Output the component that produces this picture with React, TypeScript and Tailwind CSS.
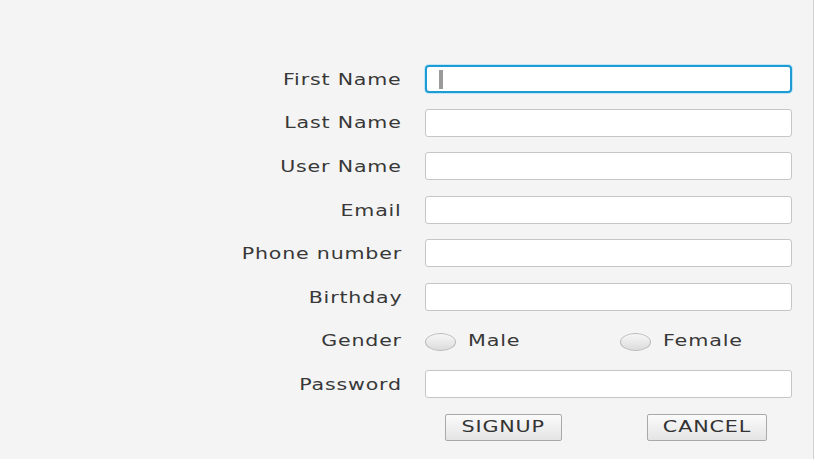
import { useState } from "react";

const fields = ["First Name", "Last Name", "User Name", "Email", "Phone number", "Birthday"];

function Radio({ label, checked, onClick }: { label: string; checked: boolean; onClick: () => void }) {
  return (
    <button type="button" onClick={onClick} className="flex w-[195px] shrink-0 items-center gap-[12px]">
      <span className="flex h-[18px] w-[31px] items-center justify-center rounded-[50%] border border-[#b9b9b9] bg-gradient-to-b from-[#f7f7f7] to-[#dcdcdc]">
        {checked && <span className="h-[7px] w-[12px] rounded-[50%] bg-[#333]" />}
      </span>
      <span className="inline-block origin-left scale-x-[1.38]">{label}</span>
    </button>
  );
}

export default function App() {
  const [gender, setGender] = useState<string | null>(null);

  return (
    <div
      className="h-[459px] w-[814px] overflow-hidden border-r border-[#cfcfcf] bg-[#f4f4f4] pt-[65px] text-[15px] tracking-[0.6px] text-[#383838]"
      style={{ fontFamily: '"DejaVu Sans", sans-serif' }}
    >
      <div className="grid grid-cols-[402px_367px] gap-x-[23px] gap-y-[15.6px]">
        {fields.map((f, i) => (
          <div key={f} className="contents">
            <label className="flex h-[28px] items-center justify-end pt-[2px]">
              <span className="inline-block origin-right scale-x-[1.37]">{f}</span>
            </label>
            {i === 0 ? (
              <div className="flex h-[28px] items-center rounded-[4px] border-2 border-[#1f9bd3] bg-white pl-[12px] shadow-[0_0_0_1px_#bfe6f6]">
                <span className="h-[19px] w-[4px] bg-[#9a9a9a]" />
              </div>
            ) : (
              <input className="h-[28px] rounded-[3px] border border-[#c6c6c6] bg-white px-2 outline-none" />
            )}
          </div>
        ))}

        <label className="flex h-[28px] items-center justify-end pt-[2px]">
          <span className="inline-block origin-right scale-x-[1.37]">Gender</span>
        </label>
        <div className="flex h-[28px] items-center pt-[2px]">
          <Radio label="Male" checked={gender === "m"} onClick={() => setGender("m")} />
          <Radio label="Female" checked={gender === "f"} onClick={() => setGender("f")} />
        </div>

        <label className="flex h-[28px] items-center justify-end pt-[2px]">
          <span className="inline-block origin-right scale-x-[1.37]">Password</span>
        </label>
        <input type="password" className="h-[28px] rounded-[3px] border border-[#c6c6c6] bg-white px-2 outline-none" />
      </div>

      {/* BUTTONS */}
      <div className="mt-[16px] flex pl-[445px]">
        <button className="h-[27px] w-[117px] rounded-[2px] border border-[#a9a9a9] bg-gradient-to-b from-[#fbfbfb] to-[#e4e4e4] text-[15px] text-[#333]">
          <span className="inline-block scale-x-[1.38]">SIGNUP</span>
        </button>
        <button className="ml-[85px] h-[27px] w-[120px] rounded-[2px] border border-[#a9a9a9] bg-gradient-to-b from-[#fbfbfb] to-[#e4e4e4] text-[15px] text-[#333]">
          <span className="inline-block scale-x-[1.38]">CANCEL</span>
        </button>
      </div>
    </div>
  );
}
